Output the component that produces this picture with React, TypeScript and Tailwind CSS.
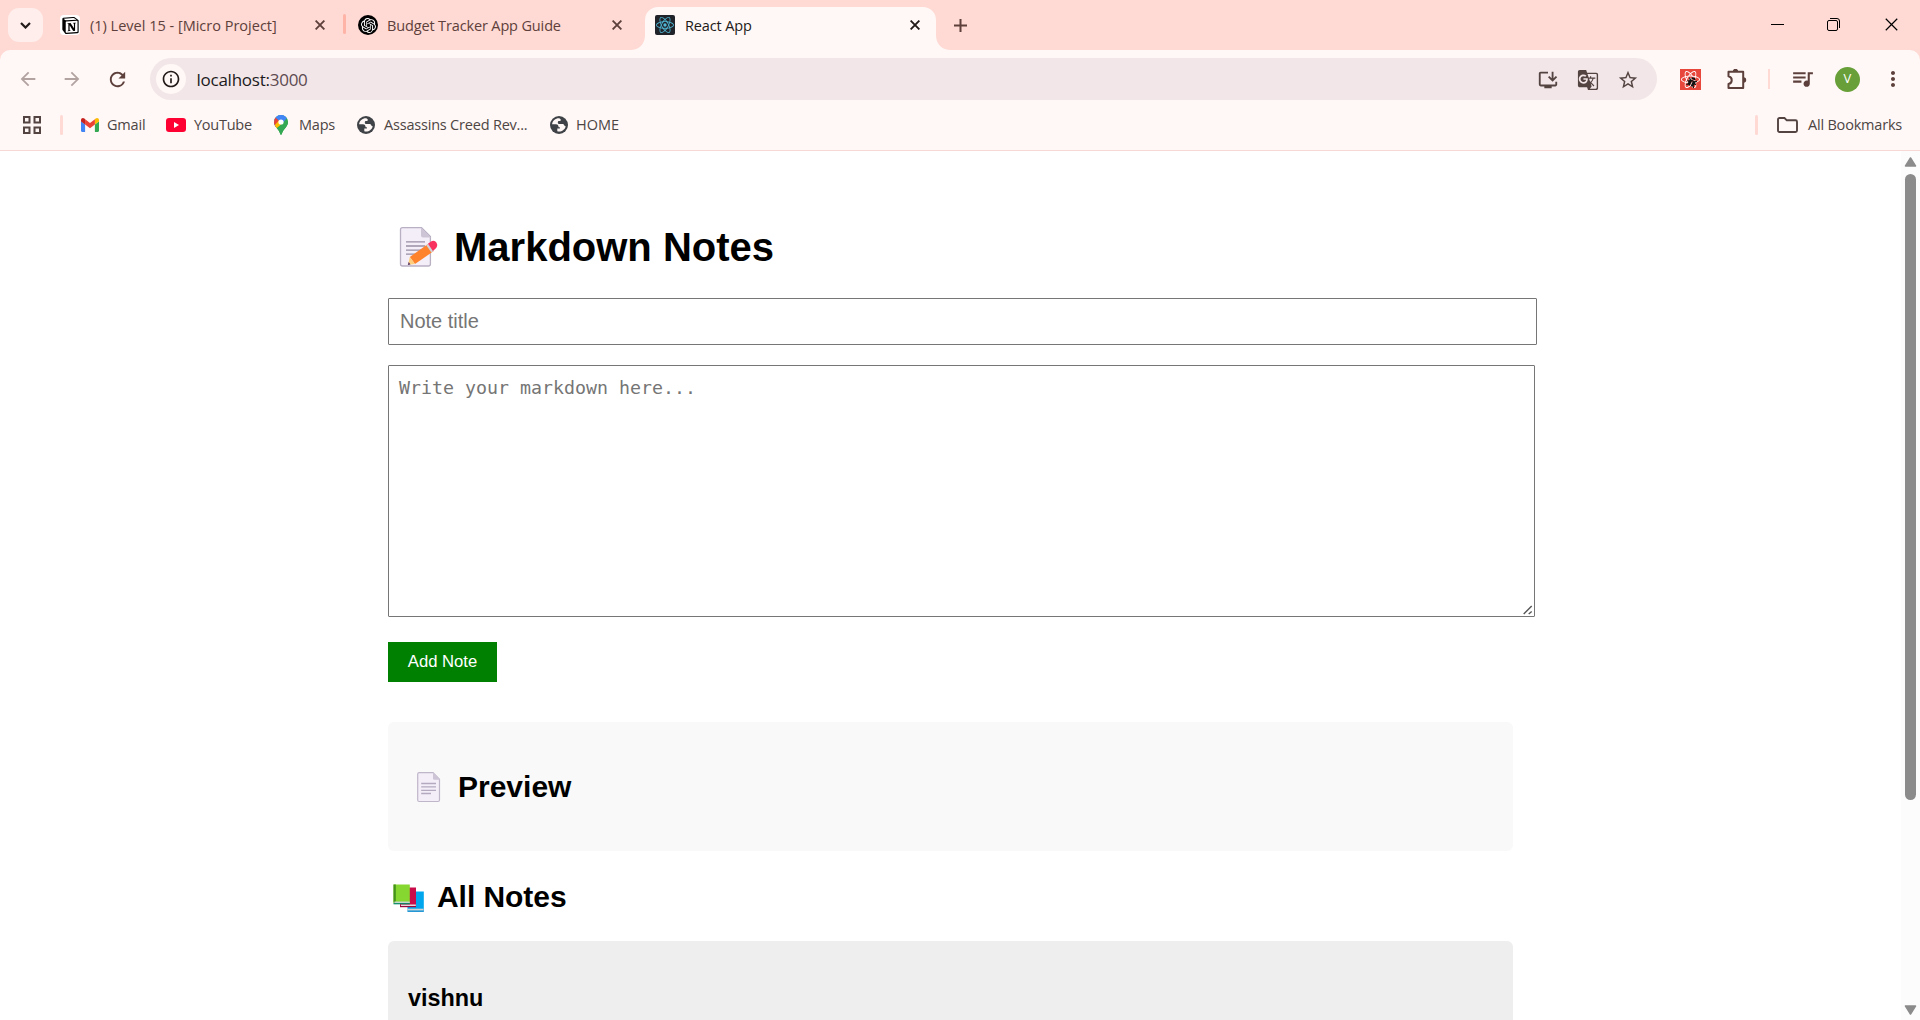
import React from "react";
import { SiNotion, SiOpenai, SiReact } from "react-icons/si";
import {
  MdArrowBack,
  MdArrowForward,
  MdGTranslate,
  MdInstallDesktop,
  MdMoreVert,
  MdOutlineInfo,
  MdQueueMusic,
  MdRefresh,
  MdStarBorder,
} from "react-icons/md";
import { FaBug } from "react-icons/fa";

function Cross({ size = 10, width = 1.9, color = "#5d403b" }: { size?: number; width?: number; color?: string }) {
  return (
    <svg width={size} height={size} viewBox="0 0 10 10" className="shrink-0">
      <path d="M0.6 0.6 9.4 9.4M9.4 0.6 0.6 9.4" stroke={color} strokeWidth={width} fill="none" />
    </svg>
  );
}

function Globe() {
  return (
    <svg width="18" height="18" viewBox="0 0 18 18" className="shrink-0">
      <circle cx="9" cy="9" r="9" fill="#3f4347" />
      <path
        d="M9.3 2.2C5.6 2 2.5 4.6 2.1 8.2c1.300.2 2.600.2 4 .1 1.300 0 2.200.7 2.300 2 .1.900.6 1.100 1.500 1.100v1.200H7.300v2.700c3.600 1.100 7.600-1.300 8.500-5-.9-.1-1.300-.5-1.700-1.300-.3-.8-.9-1.100-1.800-1.100H9.500c-1.400 0-1.700-.6-1.700-1.500s.5-1.300 1.500-1.300c1.200 0 1.500-.4 1.500-1.300 0-.6-.6-1-1.500-1.600Z"
        fill="#fff8f6"
      />
    </svg>
  );
}

function Gmail() {
  return (
    <svg width="18" height="14" viewBox="0 0 18 14" className="shrink-0">
      <path d="M0 2.500V12.800C0 13.500.5 14 1.200 14H4.100V6.500L0 3.300Z" fill="#4285f4" />
      <path d="M18 2.500V12.800C18 13.500 17.500 14 16.800 14H13.900V6.500L18 3.300Z" fill="#34a853" />
      <path d="M13.900 1.300V6.500L18 3.500V2C18 .1 15.900-.6 14.600.600Z" fill="#fbbc04" />
      <path d="M4.100 6.500V1.200L9 4.900 13.900 1.200V6.500L9 10.200Z" fill="#ea4335" />
      <path d="M0 2V3.500L4.100 6.500V1.300L3.400.6C2.100-.6 0 .1 0 2Z" fill="#c5221f" />
    </svg>
  );
}

function YouTube() {
  return (
    <svg width="20" height="14" viewBox="0 0 20 14" className="shrink-0">
      <rect width="20" height="14" rx="3" fill="#ff0033" />
      <path d="M8 4v6l5-3Z" fill="#fff" />
    </svg>
  );
}

function MapsPin() {
  return (
    <svg width="14" height="20" viewBox="0 0 14 20" className="shrink-0">
      <defs>
        <clipPath id="pin">
          <path d="M7 0a7 7 0 0 0-7 7c0 2 .7 3.300 1.900 4.900C3.700 14.300 5.500 16 6.300 19.200c.2 1 1.200 1 1.400 0C8.500 16 10.300 14.300 12.100 11.900 13.300 10.300 14 9 14 7a7 7 0 0 0-7-7Z" />
        </clipPath>
      </defs>
      <g clipPath="url(#pin)">
        <rect width="14" height="20" fill="#34a853" />
        <path d="M0 14 14 0V-1H0Z" fill="#4285f4" />
        <path d="M-1 2.200 1.600 2.500 7 7-1 16Z" fill="#ea4335" />
        <path d="M0 11 7 3 11 6 2 14Z" fill="#fbbc04" />
        <path d="M13 3 9 7 5.500 11.200 2.500 13.500 7 20 15 10Z" fill="#34a853" />
        <path d="M1.600 2.500 5 5.500 9.500 7 13.500 2.500 9 0 4 0Z" fill="#4285f4" />
      </g>
      <circle cx="7" cy="7" r="2.600" fill="#fff" />
    </svg>
  );
}

function Puzzle() {
  return (
    <svg width="21" height="21" viewBox="0 0 21 21" className="shrink-0">
      <path
        d="M2.500 2.700H17.200V19H2.500V15C6.800 14 6.800 8.300 2.500 7.300Z"
        fill="none"
        stroke="#5d403b"
        strokeWidth="2"
        strokeLinejoin="round"
      />
      <path d="M6.800 2.500a2.700 2.700 0 0 1 5.400 0ZM17.500 8.300a2.700 2.700 0 0 1 0 5.400Z" fill="#5d403b" />
    </svg>
  );
}

function Memo() {
  return (
    <svg width="55" height="46" viewBox="0 0 55 46" className="shrink-0">
      <path d="M14.500 3.600H33.500L42.400 12.500V40a2 2 0 0 1-2 2H14.500a2 2 0 0 1-2-2V5.600a2 2 0 0 1 2-2Z" fill="#f3eef8" stroke="#b9b0c4" strokeWidth="1.300" />
      <path d="M33 3.500 42.800 13.500H35a2 2 0 0 1-2-2Z" fill="#cdc4d6" />
      <path d="M18 17.800H37M18 22H37M18 26.200H34M18 30.200H28" stroke="#998ea4" strokeWidth="1.300" />
      <path d="M21.800 33 40.300 19.800 45.500 27.200 27 40Z" fill="#ff822d" />
      <path d="M21.800 33 27 40 20 40.800Z" fill="#ffce7c" />
      <path d="M20.700 38 22.500 40.400 19.800 41Z" fill="#533566" />
      <path d="M38.300 21.200 41 19.200 46.200 26.600 43.400 28.600Z" fill="#d3d3d8" />
      <path d="M40 19.800 43 17.600C45.200 16.100 47.300 16.900 48.500 18.800 49.800 20.800 49.300 23 47.700 24.600L44.900 26.900Z" fill="#f8315f" />
    </svg>
  );
}

function Page() {
  return (
    <svg width="41" height="34" viewBox="0 0 41 34" className="shrink-0">
      <path d="M11.200 2.700H25L31.500 9.200V30a1.500 1.500 0 0 1-1.500 1.500H11.200A1.500 1.500 0 0 1 9.700 30V4.200a1.500 1.500 0 0 1 1.500-1.500Z" fill="#f3eef8" stroke="#c0b6ca" strokeWidth="1.200" />
      <path d="M25 2.300 32 9.700H26.500A1.500 1.500 0 0 1 25 8.200Z" fill="#cdc4d6" />
      <path d="M13.200 13.500H28M13.200 16.900H28M13.200 20.300H28M13.200 23.500H23" stroke="#b4a9bf" strokeWidth="1.300" />
    </svg>
  );
}

function Books() {
  return (
    <svg width="41" height="34" viewBox="0 0 41 34" className="shrink-0">
      <path d="M19.500 11.500H35.800V31.300H19.500Z" fill="#00a6ed" />
      <path d="M19.500 28.700H35.500V30.700H19.500Z" fill="#d3d3d3" />
      <path d="M19.500 30.700H35.800V31.800H19.500Z" fill="#0084ce" />
      <path d="M12 7.500H28V26.700H12Z" fill="#ca0b4a" />
      <path d="M13 24.500H27.800V26H13Z" fill="#e6d8dd" />
      <path d="M12 26H28V27.200H12Z" fill="#990838" />
      <path d="M5.500 4.500H21.800V23.300H5.500Z" fill="#86d72f" />
      <path d="M5.500 4.500H7.800V22.500H5.500Z" fill="#44911b" />
      <path d="M6.500 21.500H21.700V23.200H6.500Z" fill="#c5d8cf" />
      <path d="M5.500 23.100H21.800V24.300H5.500Z" fill="#008463" />
    </svg>
  );
}

function TabStrip() {
  return (
    <div className="flex h-[50px] shrink-0 items-start text-[14.5px] leading-[50px] text-[#5d403b]">
      <div className="mt-2 ml-2 flex h-[34px] w-[35px] shrink-0 items-center justify-center rounded-[11px] bg-[#ffeeeb]">
        <svg width="11" height="7" viewBox="0 0 11 7">
          <path d="M1 1 5.500 5.500 10 1" fill="none" stroke="#221a19" strokeWidth="2.200" />
        </svg>
      </div>
      <div className="ml-[17px] flex h-[50px] w-[283px] items-center">
        <div className="flex h-5 w-5 shrink-0 items-center justify-center rounded-[4px] bg-white">
          <SiNotion size={17} color="#000" />
        </div>
        <span className="ml-2.5 w-[225px] pt-0.5 whitespace-nowrap">(1) Level 15 - [Micro Project]</span>
        <Cross />
      </div>
      <div className="mt-3.5 h-5 w-[3px] shrink-0 rounded-full bg-[#ffb4a8]" />
      <div className="ml-3 flex h-[50px] w-[287px] items-center">
        <div className="flex h-5 w-5 shrink-0 items-center justify-center rounded-full bg-black">
          <SiOpenai size={15} color="#fff" />
        </div>
        <span className="ml-[9px] w-[225px] pt-0.5 whitespace-nowrap tracking-[-0.14px]">Budget Tracker App Guide</span>
        <Cross />
      </div>
      <div className="relative mt-[7px] flex h-[43px] w-[291px] shrink-0 items-center rounded-t-[13px] bg-[#fff8f6] pb-[7px] text-[#221a19]">
        <svg width="15" height="15" viewBox="0 0 15 15" className="absolute bottom-0 -left-[15px]">
          <path d="M15 0V15H0C9 15 15 9 15 0Z" fill="#fff8f6" />
        </svg>
        <svg width="15" height="15" viewBox="0 0 15 15" className="absolute -right-[15px] bottom-0">
          <path d="M0 0V15H15C6 15 0 9 0 0Z" fill="#fff8f6" />
        </svg>
        <div className="ml-2.5 flex h-5 w-5 shrink-0 items-center justify-center rounded-[2px] bg-[#20232a]">
          <SiReact size={18} color="#4fb6d3" />
        </div>
        <span className="ml-2.5 w-[225px] pt-0.5 whitespace-nowrap tracking-[-0.14px]">React App</span>
        <Cross color="#221a19" />
      </div>
      <svg width="13" height="13" viewBox="0 0 13 13" className="mt-[19px] ml-[18px] shrink-0">
        <path d="M6.500 0V13M0 6.500H13" stroke="#5d403b" strokeWidth="2" />
      </svg>
      <div className="mt-[18px] mr-[22px] ml-auto flex items-center gap-[43px]">
        <svg width="13" height="13" viewBox="0 0 13 13">
          <path d="M0 6.500H13" stroke="#000" />
        </svg>
        <svg width="13" height="13" viewBox="0 0 13 13">
          <rect x="0.500" y="2.500" width="10" height="10" rx="1.500" fill="none" stroke="#000" />
          <path d="M3 .5H10A2.500 2.500 0 0 1 12.500 3V10" fill="none" stroke="#000" />
        </svg>
        <div className="ml-0.5 flex">
          <Cross size={13} width={0.9} color="#000" />
        </div>
      </div>
    </div>
  );
}

function Toolbar() {
  return (
    <div className="flex h-[50px] shrink-0 items-center rounded-t-[10px] bg-[#fff8f6] pt-2 text-[#5d403b]">
      <MdArrowBack size={22} color="#b3a3a0" className="ml-[17px] shrink-0" />
      <MdArrowForward size={22} color="#b3a3a0" className="ml-[22px] shrink-0" />
      <MdRefresh size={23} className="ml-[23px] shrink-0" />
      <div className="ml-[21px] flex h-[42px] w-[1507px] shrink-0 items-center rounded-full bg-[#f2e6e8] pl-1.5">
        <div className="flex h-[30px] w-[30px] items-center justify-center rounded-full bg-[#fff8f6]">
          <MdOutlineInfo size={20} color="#221a19" />
        </div>
        <span className="ml-[10.5px] pt-px text-[17px] leading-[41px] tracking-[-0.25px] text-[#5d4a50]">
          <span className="text-[#201a1c]">localhost:</span>3000
        </span>
        <div className="mr-[18px] ml-auto flex items-center gap-[18px] pt-px text-[#534341]">
          <MdInstallDesktop size={22} />
          <MdGTranslate size={22} />
          <MdStarBorder size={22} />
        </div>
      </div>
      <div className="relative ml-[23px] flex h-[21px] w-[21px] shrink-0 items-center justify-center bg-[#e8473c]">
        <SiReact size={19} color="#fff" />
        <FaBug size={10} color="#111" className="absolute top-[8px] left-[7px] rotate-[25deg]" />
      </div>
      <div className="ml-[25px]">
        <Puzzle />
      </div>
      <div className="ml-[21px] h-5 w-0.5 bg-[#ffd9d3]" />
      <MdQueueMusic size={25} className="-mt-0.5 ml-[20px]" />
      <div className="ml-[20px] flex h-[25px] w-[25px] items-center justify-center rounded-full bg-[#689f38] text-[13px] text-white">
        V
      </div>
      <MdMoreVert size={24} className="ml-[21px]" />
    </div>
  );
}

function BookmarksBar() {
  return (
    <div className="flex h-[51px] shrink-0 items-center border-b border-[#f8d8d3] bg-[#fff8f6] text-[14.5px] leading-[50px] whitespace-nowrap text-[#4d4544]">
      <svg width="18" height="18" viewBox="0 0 18 18" className="ml-[23px]">
        <path d="M1 1H6.500V6.500H1ZM11.500 1H17V6.500H11.500ZM1 11.500H6.500V17H1ZM11.500 11.500H17V17H11.500Z" fill="none" stroke="#534341" strokeWidth="2" />
      </svg>
      <div className="ml-[19px] h-5 w-[3px] rounded-full bg-[#ffd9d3]" />
      <div className="ml-[18px] flex w-[85px] items-center gap-2 tracking-[-0.2px]">
        <Gmail />
        <span>Gmail</span>
      </div>
      <div className="flex w-[108px] items-center gap-2 tracking-[-0.25px]">
        <YouTube />
        <span>YouTube</span>
      </div>
      <div className="flex w-[83px] items-center gap-[11px] tracking-[-0.2px]">
        <MapsPin />
        <span>Maps</span>
      </div>
      <div className="flex w-[193px] items-center gap-[9px] tracking-[-0.2px]">
        <Globe />
        <span>Assassins Creed Rev...</span>
      </div>
      <div className="flex items-center gap-2">
        <Globe />
        <span>HOME</span>
      </div>
      <div className="ml-auto h-5 w-[3px] rounded-full bg-[#ffd9d3]" />
      <svg width="21" height="16" viewBox="0 0 21 16" className="ml-[19px]">
        <path d="M1 2.500C1 1.700 1.700 1 2.500 1H7.500L9.800 3.300H18.500C19.300 3.300 20 4 20 4.800V13.500C20 14.300 19.300 15 18.500 15H2.500C1.700 15 1 14.300 1 13.500Z" fill="none" stroke="#534341" strokeWidth="1.900" />
      </svg>
      <div className="ml-[10px] w-[112px] tracking-[-0.2px]">All Bookmarks</div>
    </div>
  );
}

function Scrollbar() {
  return (
    <div className="flex w-[19px] shrink-0 flex-col items-center bg-[#fcfcfc] pt-1.5 pr-px pb-[5px] pl-[1px]">
      <svg width="13" height="10" viewBox="0 0 12 10" className="shrink-0">
        <path d="M6 1 11 9H1Z" fill="#8b8b8b" stroke="#8b8b8b" strokeWidth="1.500" strokeLinejoin="round" />
      </svg>
      <div className="mt-[7px] h-[626px] w-[11px] shrink-0 rounded-full bg-[#8b8b8b]" />
      <svg width="13" height="10" viewBox="0 0 12 10" className="mt-auto shrink-0">
        <path d="M6 9 1 1H11Z" fill="#8b8b8b" stroke="#8b8b8b" strokeWidth="1.500" strokeLinejoin="round" />
      </svg>
    </div>
  );
}

export default function App() {
  return (
    <div className="flex h-[1020px] w-[1920px] flex-col overflow-hidden bg-[#ffd9d3] font-['Open_Sans','Noto_Sans',sans-serif]">
      <TabStrip />
      <Toolbar />
      <BookmarksBar />
      <div className="flex min-h-0 flex-1 bg-white">
        <main className="min-w-0 flex-1 overflow-hidden pt-[73px] pl-[388px] font-['Liberation_Sans',Arial,sans-serif] text-black">
          <h1 className="flex h-[46px] text-[40px] leading-[46px] font-bold">
            <Memo />
            <span className="ml-[11px]">Markdown Notes</span>
          </h1>
          <input
            placeholder="Note title"
            className="mt-7 block h-[47px] w-[1149px] rounded-[1px] border border-[#767676] bg-white px-[11px] text-[20px] placeholder-[#757575] outline-none"
          />
          <div className="relative mt-5 h-[252px] w-[1147px]">
            <textarea
              placeholder="Write your markdown here..."
              className="block h-[252px] w-[1147px] resize-none rounded-[1px] border border-[#767676] bg-white px-[10px] py-[10px] font-['DejaVu_Sans_Mono',monospace] text-[18.27px] leading-[24px] placeholder-[#757575] outline-none"
            />
            <svg width="10" height="10" viewBox="0 0 10 10" className="absolute right-0.5 bottom-0.5">
              <path d="M.7 9 8.700 1M5.700 9 8.700 6.500" stroke="#555" strokeWidth="1.400" />
            </svg>
          </div>
          <button className="mt-[25px] block h-10 w-[109px] bg-[#008000] pb-0.5 text-[16.67px] text-white">Add Note</button>
          <section className="mt-10 h-[129px] w-[1125px] rounded-[6px] bg-[#f9f9f9] pt-[48px] pl-5">
            <h2 className="flex text-[30px] leading-[34px] font-bold">
              <Page />
              <span className="ml-[9px]">Preview</span>
            </h2>
          </section>
          <h2 className="mt-[29px] flex text-[30px] leading-[34px] font-bold">
            <Books />
            <span className="ml-2 tracking-[-0.05px]">All Notes</span>
          </h2>
          <section className="mt-[27px] h-[200px] w-[1125px] rounded-[6px] bg-[#eeeeee] pt-[43px] pl-5">
            <h3 className="text-[23.4px] leading-[28px] font-bold">vishnu</h3>
          </section>
        </main>
        <Scrollbar />
      </div>
    </div>
  );
}
